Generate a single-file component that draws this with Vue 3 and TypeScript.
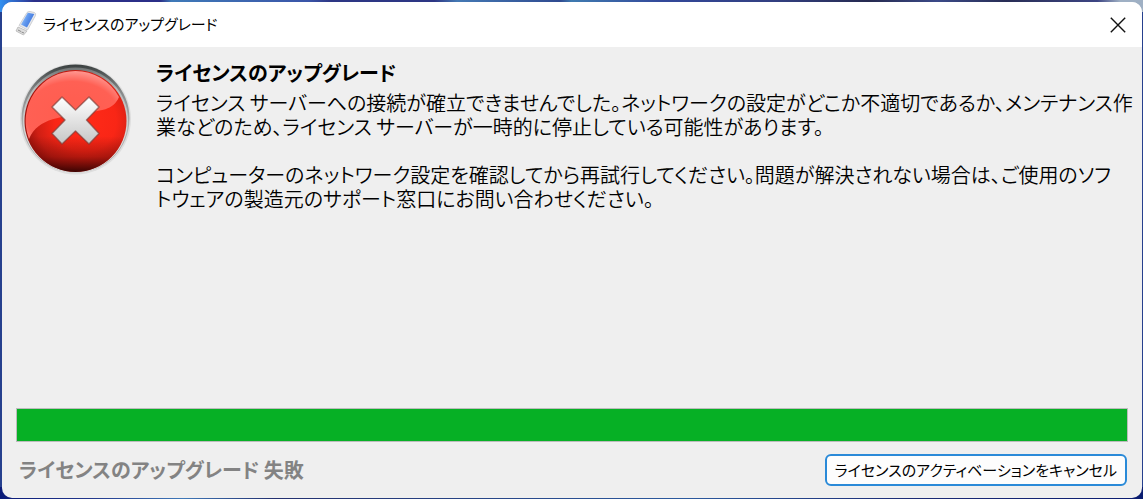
<script setup lang="ts">
import { ref } from 'vue'

const title = 'ライセンスのアップグレード'
const progress = ref(100)
const paragraphs: string[] = [
  'ライセンス サーバーへの接続が確立できませんでした。ネットワークの設定がどこか不適切であるか、メンテナンス作\n' +
    '業などのため、ライセンス サーバーが一時的に停止している可能性があります。',
  'コンピューターのネットワーク設定を確認してから再試行してください。問題が解決されない場合は、ご使用のソフ\n' +
    'トウェアの製造元のサポート窓口にお問い合わせください。',
]
</script>

<template>
  <div class="desktop">
    <section class="dialog" role="dialog" aria-labelledby="dialog-title">
      <header class="titlebar">
        <svg class="app-icon" viewBox="0 0 24 26" aria-hidden="true">
          <defs>
            <linearGradient id="stick" x1="0" y1="0.2" x2="1" y2="0.7">
              <stop offset="0" stop-color="#a9d0fa" />
              <stop offset="0.45" stop-color="#5f97ee" />
              <stop offset="0.75" stop-color="#4a7fe0" />
              <stop offset="1" stop-color="#9fc0f0" />
            </linearGradient>
          </defs>
          <path d="M4 17 L13 21 L9.500 25 L2 21 Z" fill="#dedede" stroke="#b5b5b5" stroke-width="0.800" />
          <path d="M13 2.500 Q14 1.200 16 1.500 L20.500 2.500 Q22.300 3.500 21.500 5.500 L13.500 20 L5 15.500 Z" fill="#e6e8ec" stroke="#c6c8cc" stroke-width="0.800" />
          <path d="M13.800 2.800 L20.300 4 L13 17.500 L7 14.500 Z" fill="url(#stick)" />
          <path d="M4 20 l3 1.500 M7.500 22 l2.500 1" stroke="#8c8c8c" />
        </svg>
        <h1 id="dialog-title" class="title">{{ title }}</h1>
        <button class="close" type="button" aria-label="閉じる">
          <svg viewBox="0 0 16 16" aria-hidden="true">
            <path d="M0.800 0.800 L15.200 15.200 M15.200 0.800 L0.800 15.200" stroke="#111" stroke-width="1.400" />
          </svg>
        </button>
      </header>

      <main class="content">
        <svg class="error-icon" viewBox="0 0 112 112" aria-hidden="true">
          <defs>
            <linearGradient id="rim" x1="0" y1="0" x2="0" y2="1">
              <stop offset="0" stop-color="#3a4040" />
              <stop offset="0.25" stop-color="#858888" />
              <stop offset="0.6" stop-color="#b5b5b5" />
              <stop offset="1" stop-color="#9a9a9a" />
            </linearGradient>
            <linearGradient id="bevel" x1="0" y1="0" x2="0" y2="1">
              <stop offset="0" stop-color="#6f7474" />
              <stop offset="0.2" stop-color="#b5b8b8" />
              <stop offset="1" stop-color="#f4f4f4" />
            </linearGradient>
            <radialGradient id="ball" cx="0.6" cy="0.5" r="0.6">
              <stop offset="0" stop-color="#ff2a18" />
              <stop offset="0.5" stop-color="#f92616" />
              <stop offset="0.8" stop-color="#d01f14" />
              <stop offset="1" stop-color="#9c120c" />
            </radialGradient>
            <linearGradient id="shade" x1="0" y1="0" x2="0" y2="1">
              <stop offset="0.65" stop-color="#400" stop-opacity="0" />
              <stop offset="0.85" stop-color="#400" stop-opacity="0.35" />
              <stop offset="1" stop-color="#200" stop-opacity="0.85" />
            </linearGradient>
            <radialGradient id="gloss" cx="0.5" cy="0.65" r="0.66">
              <stop offset="0" stop-color="#ff5c4e" />
              <stop offset="0.75" stop-color="#ff6054" />
              <stop offset="1" stop-color="#ff9a94" />
            </radialGradient>
            <linearGradient id="cross" x1="0" y1="0" x2="0" y2="1">
              <stop offset="0" stop-color="#ffffff" />
              <stop offset="1" stop-color="#c6c6c6" />
            </linearGradient>
          </defs>
          <circle cx="55.500" cy="56" r="55.500" fill="#dedede" />
          <circle cx="55.500" cy="55.500" r="54" fill="url(#rim)" />
          <circle cx="55.500" cy="57" r="52.500" fill="url(#bevel)" />
          <circle cx="55.500" cy="58" r="51" fill="url(#ball)" />
          <circle cx="55.500" cy="58" r="51" fill="url(#shade)" />
          <path d="M9 76 A50 50 0 0 1 55.500 8 A50 50 0 0 1 99 34 C93 48 80 47 66 50 C44 54 18 54 9 76 Z" fill="url(#gloss)" />
          <path
            d="M42 34 L55.500 47 L69 34 L79 44 L66.500 57 L79 70.500 L69 81 L55.500 68 L42 81 L32 70.500 L45 57 L32 44 Z"
            fill="url(#cross)" stroke="#7a3c38" stroke-opacity="0.650" stroke-width="1.500" stroke-linejoin="round"
          />
        </svg>
        <div class="message">
          <h2 class="heading">{{ title }}</h2>
          <p v-for="text in paragraphs" :key="text" class="paragraph">{{ text }}</p>
        </div>
      </main>

      <progress class="progress" :value="progress" max="100" aria-labelledby="status">100%</progress>

      <footer class="footer">
        <span id="status" class="status">ライセンスのアップグレード 失敗</span>
        <button class="cancel" type="button">ライセンスのアクティベーションをキャンセル</button>
      </footer>
    </section>
  </div>
</template>

<style>
body {
  margin: 0;
}
</style>

<style scoped>
.desktop {
  box-sizing: border-box;
  display: flex;
  min-height: 100vh;
  padding: 2px 1px 1px 2px;
  background:
    linear-gradient(90deg, #3290f0 0, #2f50b0 2%, #2b2f88 3%, #2b2f88 14%, #3f7ab8 15%, #3a55a8 27%, #2d3684 29%, #2d3684 38%, #4479b4 40%, #2f4a90 49%, #3f7ab0 50%, #33489a 58%, #323f80 68%, #262a50 76%, #3b4a88 82%, #282d55 88%, #3d4583 96%, #9fb0c4 98%) top / 100% 12px no-repeat,
    linear-gradient(90deg, #0a1a78 0, #23388c 8%, #3f78b8 16%, #23306f 24%, #2c5a9e 60%, #1c2b74 80%, #0a1c70 100%) bottom / 100% 12px no-repeat,
    #26408e;
  font-family: "Noto Sans CJK JP", sans-serif;
  font-feature-settings: "palt";
  color: #000;
}

.dialog {
  flex: 1;
  display: flex;
  flex-direction: column;
  min-width: 0;
  border-radius: 10px;
  overflow: hidden;
  background: #efefef;
}

.titlebar {
  display: flex;
  align-items: center;
  height: 45px;
  padding: 0 16px 0 12px;
  background: #fff;
}

.app-icon {
  width: 24px;
  height: 26px;
  margin-bottom: 4px;
}

.title {
  flex: 1;
  margin: 0 0 2px 5px;
  font-size: 15px;
  font-weight: 400;
  line-height: 24px;
}

.close {
  display: flex;
  padding: 0;
  border: 0;
  background: none;
}

.close svg {
  width: 16px;
  height: 16px;
}

.content {
  flex: 1;
  display: flex;
  align-items: flex-start;
  gap: 24px;
  padding: 16px 16px 16px 18px;
}

.error-icon {
  flex: none;
  width: 112px;
  height: 112px;
}

.message {
  min-width: 0;
  margin-top: -2px;
}

.heading {
  margin: 0 0 6px;
  font-size: 20px;
  font-weight: 700;
  line-height: 24px;
}

.paragraph {
  margin: 0 0 24px;
  font-size: 20px;
  font-weight: 350;
  line-height: 24px;
  white-space: pre;
}

.progress {
  appearance: none;
  display: block;
  box-sizing: border-box;
  width: auto;
  height: 34px;
  margin: 0 14px;
  border: 1px solid #bcbcbc;
  background: #e6e6e6;
}

.progress::-webkit-progress-bar {
  background: #e6e6e6;
}

.progress::-webkit-progress-value {
  background: #06b025;
}

.footer {
  display: flex;
  align-items: center;
  justify-content: space-between;
  padding: 12px 15px 12px 17px;
}

.status {
  color: #838383;
  font-size: 20px;
  font-weight: 700;
  line-height: 24px;
}

.cancel {
  height: 32px;
  padding: 0 8px;
  border: 2px solid #2a8ad8;
  border-radius: 6px;
  background: #fdfdfd;
  color: #000;
  font: inherit;
  font-feature-settings: inherit;
  font-size: 15px;
  line-height: 24px;
  white-space: nowrap;
}
</style>
